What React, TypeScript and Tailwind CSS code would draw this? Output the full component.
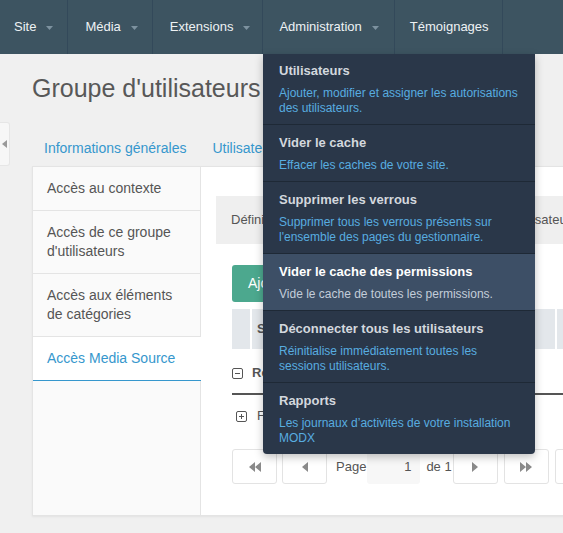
import { ReactNode } from 'react';

const navItems = [
  { label: 'Site', caret: true, pad: 'pl-[14px] pr-[14px]' },
  { label: 'Média', caret: true, pad: 'pl-[17px] pr-[14px]' },
  { label: 'Extensions', caret: true, pad: 'pl-[17px] pr-[12px]' },
  { label: 'Administration', caret: true, pad: 'pl-[16px] pr-[15px]' },
  { label: 'Témoignages', caret: false, pad: 'pl-[15px] pr-[13px]' },
];

const menu = [
  { title: 'Utilisateurs', lines: ['Ajouter, modifier et assigner les autorisations', 'des utilisateurs.'] },
  { title: 'Vider le cache', lines: ['Effacer les caches de votre site.'] },
  { title: 'Supprimer les verrous', lines: ['Supprimer tous les verrous présents sur', "l'ensemble des pages du gestionnaire."] },
  { title: 'Vider le cache des permissions', lines: ['Vide le cache de toutes les permissions.'], active: true },
  { title: 'Déconnecter tous les utilisateurs', lines: ['Réinitialise immédiatement toutes les', 'sessions utilisateurs.'] },
  { title: 'Rapports', lines: ['Les journaux d’activités de votre installation', 'MODX'] },
];

const sideTabs = [
  { lines: ['Accès au contexte'] },
  { lines: ['Accès de ce groupe', "d'utilisateurs"] },
  { lines: ['Accès aux éléments', 'de catégories'] },
  { lines: ['Accès Media Source'], active: true },
];

function Caret() {
  return (
    <svg width="7" height="4" viewBox="0 0 7 4" className="ml-[10px] mt-[2px]">
      <path d="M0 0h7L3.5 4z" fill="#7d929f" />
    </svg>
  );
}

function PagerButton({ children, className = '' }: { children?: ReactNode; className?: string }) {
  return (
    <div className={`flex h-[35px] w-[45px] shrink-0 items-center justify-center rounded-[3px] border border-[#e3e3e3] bg-white ${className}`}>
      {children}
    </div>
  );
}

function Tri({ dir }: { dir: 'l' | 'r' }) {
  return (
    <svg width="6" height="10" viewBox="0 0 6 10">
      <path d={dir === 'l' ? 'M6 0v10L0 5z' : 'M0 0v10l6-5z'} fill="#8a8a8a" />
    </svg>
  );
}

function DoubleTri({ dir }: { dir: 'l' | 'r' }) {
  return (
    <svg width="12" height="10" viewBox="0 0 12 10">
      <path d={dir === 'l' ? 'M6 0v10L0 5zM12 0v10L6 5z' : 'M0 0v10l6-5zM6 0v10l6-5z'} fill="#8a8a8a" />
    </svg>
  );
}

export default function App() {
  return (
    <div className="relative h-[533px] w-full overflow-hidden bg-[#f0f0f0] font-['Liberation_Sans',Arial,sans-serif] text-[#555]">
      {/* top bar */}
      <div className="flex h-[54px] bg-[#3d5461] text-[13px] text-[#eef2f4]">
        {navItems.map((item) => (
          <div key={item.label} className={`flex items-center border-r border-[#33495a] ${item.pad}`}>
            <span>{item.label}</span>
            {item.caret && <Caret />}
          </div>
        ))}
      </div>

      {/* collapse handle */}
      <div className="absolute left-0 top-[122px] flex h-[44px] w-[10px] items-center justify-center rounded-r-[3px] border border-l-0 border-[#e6e6e6] bg-[#f7f7f7]">
        <svg width="5" height="8" viewBox="0 0 5 8">
          <path d="M5 0v8L0 4z" fill="#9a9a9a" />
        </svg>
      </div>

      <div className="pl-[32px]">
        <h1 className="pt-[19px] text-[25px] leading-[30px] text-[#585858] whitespace-nowrap">Groupe d'utilisateurs : Administrateur</h1>

        <div className="mt-[27px] flex h-[36px] items-center text-[14px] text-[#3697cd]">
          <span className="px-[12px]">Informations générales</span>
          <span className="px-[14px]">Utilisateurs</span>
          <span className="px-[14px]">Permissions</span>
        </div>

        {/* panel */}
        <div className="flex h-[350px] w-[600px] border border-r-0 border-[#e4e4e4] bg-white shadow-[0_1px_2px_rgba(0,0,0,0.06)]">
          <div className="w-[168px] shrink-0 border-r border-[#e4e4e4] bg-[#fafafa] text-[14px] leading-[19px]">
            {sideTabs.map((t) =>
              t.active ? (
                <div key={t.lines[0]} className="mr-[-1px] border-b border-[#3697cd] bg-white py-[12px] pl-[14px] text-[#3697cd]">
                  {t.lines[0]}
                </div>
              ) : (
                <div key={t.lines[0]} className="border-b border-[#e4e4e4] py-[12px] pl-[14px] text-[#555]">
                  {t.lines.map((l) => (
                    <div key={l}>{l}</div>
                  ))}
                </div>
              )
            )}
          </div>

          <div className="flex-1 pl-[15px] pt-[29px]">
            <div className="flex h-[48px] items-center whitespace-nowrap bg-[#efefef] pl-[15px] text-[13px] text-[#555]">
              Définissez les accès aux sources de ce groupe d'utilisateurs.
            </div>

            <div className="pl-[16px]">
              <div className="mt-[21px] flex h-[37px] w-[200px] items-center rounded-[3px] bg-[#4ca88e] pl-[16px] text-[14px] text-white">
                Ajouter une source
              </div>

              <div className="mt-[7px] flex h-[40px] text-[13px] font-bold text-[#555]">
                <div className="w-[18px] bg-[#e3e7eb]" />
                <div className="ml-[2px] flex w-[303px] items-center bg-[#e3e7eb] pl-[5px]">Source</div>
                <div className="ml-[2px] w-[100px] bg-[#e3e7eb]" />
              </div>

              <div className="flex h-[46px] items-center border-b-2 border-[#555] pt-[4px] text-[13px] font-bold">
                <svg width="11" height="11" viewBox="0 0 11 11">
                  <rect x="0.5" y="0.5" width="10" height="10" rx="1.5" fill="none" stroke="#555" />
                  <path d="M3 5.5h5" stroke="#555" />
                </svg>
                <span className="ml-[9px]">Ressources</span>
              </div>

              <div className="flex h-[42px] items-center pl-[4px] text-[13px]">
                <svg width="11" height="11" viewBox="0 0 11 11">
                  <rect x="0.5" y="0.5" width="10" height="10" rx="1.5" fill="none" stroke="#555" />
                  <path d="M3 5.5h5M5.5 3v5" stroke="#555" />
                </svg>
                <span className="ml-[10px]">Filesystem</span>
              </div>

              <div className="mt-[12px] flex h-[35px] items-center text-[13px] text-[#555]">
                <PagerButton>
                  <DoubleTri dir="l" />
                </PagerButton>
                <PagerButton className="ml-[5px]">
                  <Tri dir="l" />
                </PagerButton>
                <span className="ml-[9px]">Page</span>
                <div className="ml-[1px] flex h-[35px] w-[53px] shrink-0 items-center justify-end rounded-[3px] bg-[#f7f7f7] pr-[9px]">1</div>
                <span className="ml-[6px] whitespace-nowrap">de 1</span>
                <PagerButton className="ml-[1px]">
                  <Tri dir="r" />
                </PagerButton>
                <PagerButton className="ml-[6px]">
                  <DoubleTri dir="r" />
                </PagerButton>
                <PagerButton className="ml-[6px]" />
              </div>
            </div>
          </div>
        </div>
      </div>

      {/* Administration dropdown */}
      <div className="absolute left-[263px] top-[54px] w-[272px] overflow-hidden rounded-b-[4px] bg-[#2a3749] shadow-[0_3px_8px_rgba(0,0,0,0.25)]">
        {menu.map((m, i) => (
          <div
            key={m.title}
            className={`pb-[8px] pl-[16px] pr-[12px] ${i === 0 ? 'pt-[9px]' : 'pt-[10px]'} ${i < menu.length - 1 ? 'border-b border-[#1e2936]' : ''} ${
              m.active ? 'bg-[#3d4f66]' : ''
            }`}
          >
            <div className={`text-[13px] font-bold leading-[16px] ${m.active ? 'text-white' : 'text-[#d3d8de]'}`}>{m.title}</div>
            <div className={`mt-[7px] text-[12px] leading-[15px] ${m.active ? 'text-[#c3cdd9]' : 'text-[#58ade0]'}`}>
              {m.lines.map((l) => (
                <div key={l} className="whitespace-nowrap">
                  {l}
                </div>
              ))}
            </div>
          </div>
        ))}
      </div>
    </div>
  );
}
